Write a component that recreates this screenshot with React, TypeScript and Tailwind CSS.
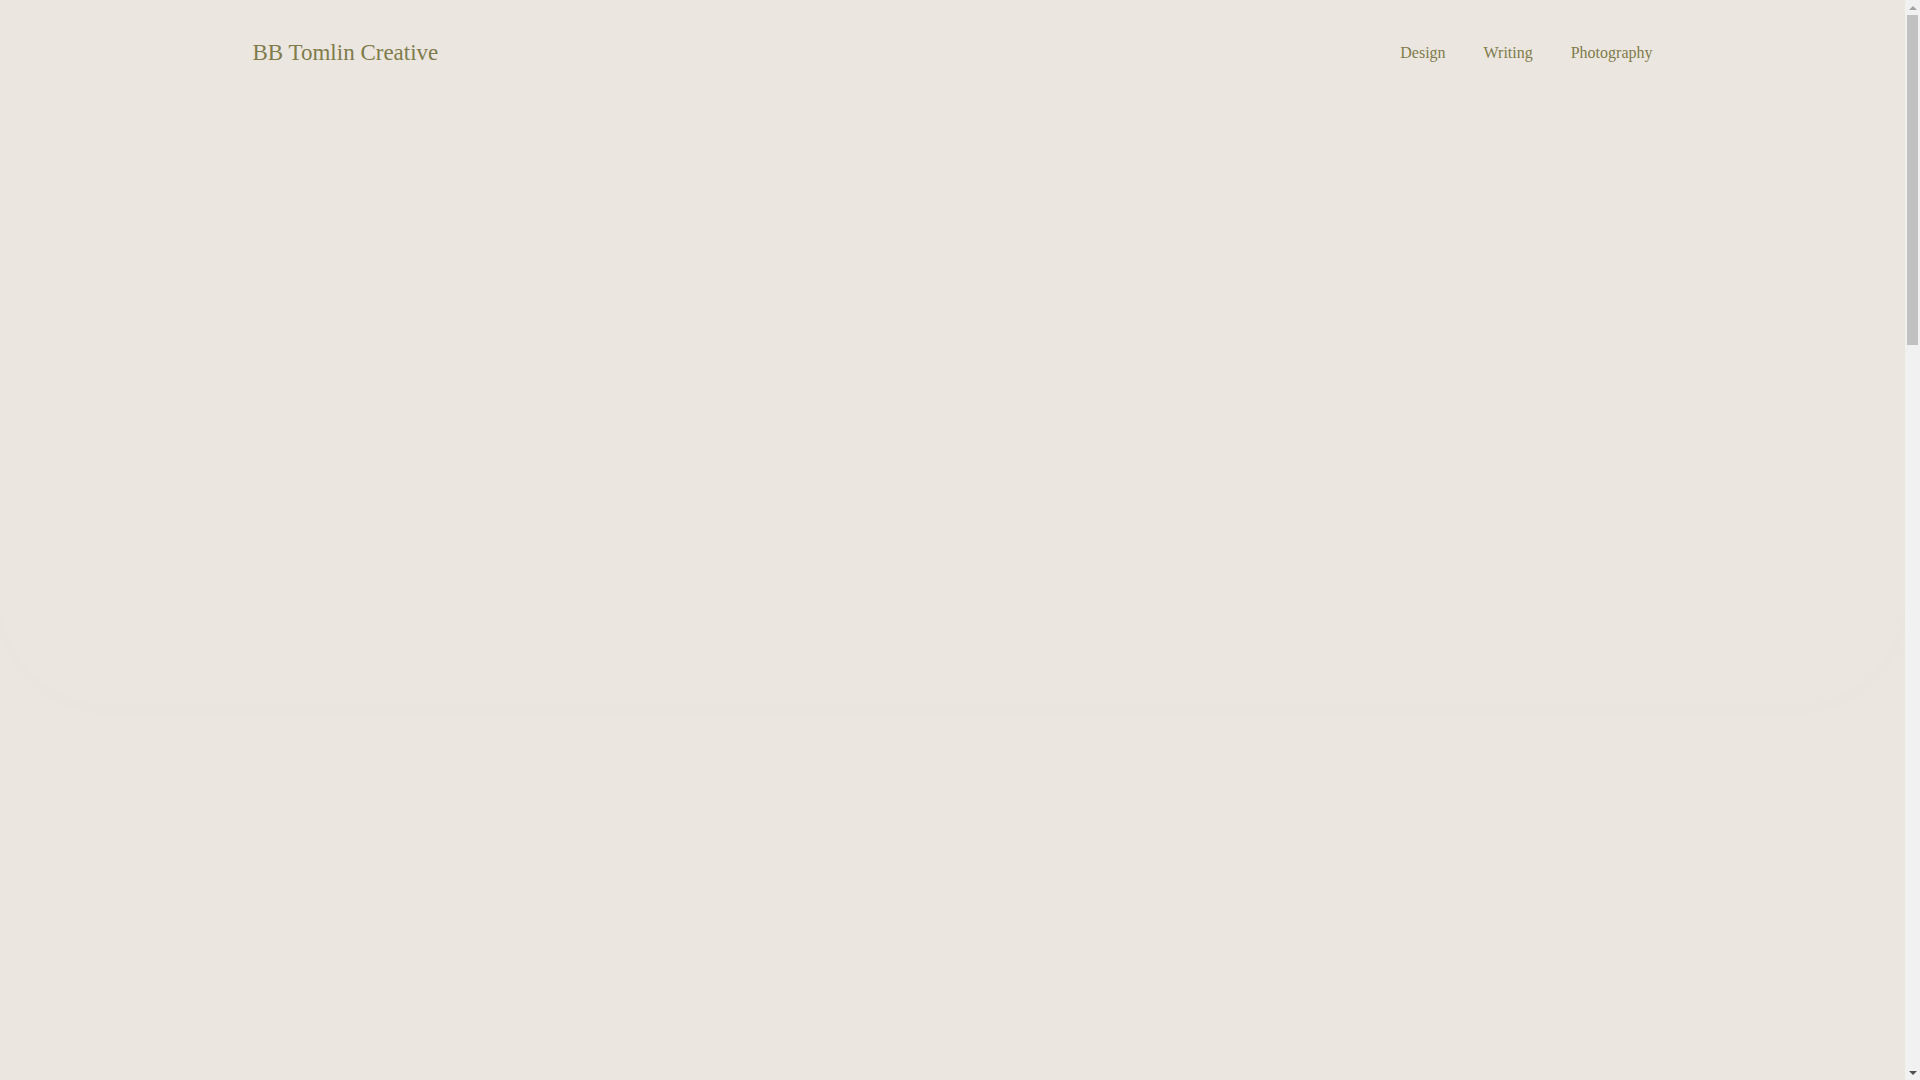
import React from 'react';

const links = ['Design', 'Writing', 'Photography'];

// the reference shows the browser's classic scrollbar, so the page is 1905px wide
function Scrollbar() {
  return (
    <aside className="flex h-screen w-[15px] shrink-0 flex-col items-center bg-[#f1f1f1]">
      <div className="flex h-[15px] items-center justify-center">
        <div className="h-0 w-0 border-x-[4px] border-b-[4px] border-x-transparent border-b-[#a3a3a3]" />
      </div>
      <div className="h-[330px] w-[11px] bg-[#c1c1c1]" />
      <div className="flex-1" />
      <div className="flex h-[15px] items-center justify-center">
        <div className="h-0 w-0 border-x-[4px] border-t-[4px] border-x-transparent border-t-[#505050]" />
      </div>
    </aside>
  );
}

export default function App() {
  return (
    <div className="flex h-screen overflow-hidden bg-[#ebe7e0] font-['Liberation_Serif',serif] text-[#7f7b4b]">
      <div className="min-w-0 flex-1">
        {/* hero, nearly invisible on the reference */}
        <section className="h-[705px] w-full rounded-b-[110px] bg-[#ebe7e0] shadow-[0_4px_30px_rgba(60,50,30,0.012)]">
          <header className="mx-auto flex h-[105px] max-w-[1400px] items-center justify-between">
            <a href="#" className="text-[23px] leading-none">BB Tomlin Creative</a>
            <nav className="flex items-center gap-[38px] text-[16px] leading-none">
              {links.map((l) => (
                <a key={l} href="#">{l}</a>
              ))}
            </nav>
          </header>
        </section>
      </div>
      <Scrollbar />
    </div>
  );
}
